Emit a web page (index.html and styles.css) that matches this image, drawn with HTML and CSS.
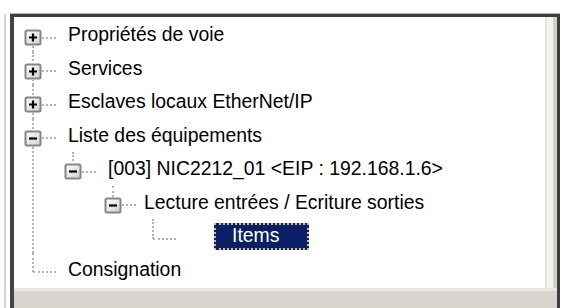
FILE: index.html
```html
<!DOCTYPE html>
<html lang="fr">
<head>
    <meta charset="UTF-8">
    <title>Arborescence</title>
    <link rel="stylesheet" href="styles.css">
</head>
<body>
    <div class="screen">
        <div class="edge"></div>
        <div class="frame">
            <div class="pane">
                <ul class="tree root">
                    <li>
                        <div class="row">
                            <span class="tog"><svg width="18" height="17" viewBox="0 0 18 17"><use href="#box"/><path d="M5 8.5h8M9 4.5v8" stroke="#000" stroke-width="2.2"/></svg></span>
                            <span class="label">Propriétés de voie</span>
                        </div>
                    </li>
                    <li>
                        <div class="row">
                            <span class="tog"><svg width="18" height="17" viewBox="0 0 18 17"><use href="#box"/><path d="M5 8.5h8M9 4.5v8" stroke="#000" stroke-width="2.2"/></svg></span>
                            <span class="label">Services</span>
                        </div>
                    </li>
                    <li>
                        <div class="row">
                            <span class="tog"><svg width="18" height="17" viewBox="0 0 18 17"><use href="#box"/><path d="M5 8.5h8M9 4.5v8" stroke="#000" stroke-width="2.2"/></svg></span>
                            <span class="label">Esclaves locaux EtherNet/IP</span>
                        </div>
                    </li>
                    <li>
                        <div class="row">
                            <span class="tog"><svg width="18" height="17" viewBox="0 0 18 17"><use href="#box"/><path d="M5 8.5h8" stroke="#000" stroke-width="2.2"/></svg></span>
                            <span class="label">Liste des équipements</span>
                        </div>
                        <ul class="tree">
                            <li>
                                <div class="row">
                                    <span class="tog"><svg width="18" height="17" viewBox="0 0 18 17"><use href="#box"/><path d="M5 8.5h8" stroke="#000" stroke-width="2.2"/></svg></span>
                                    <span class="label">[003] NIC2212_01 &lt;EIP : 192.168.1.6&gt;</span>
                                </div>
                                <ul class="tree">
                                    <li>
                                        <div class="row">
                                            <span class="tog"><svg width="18" height="17" viewBox="0 0 18 17"><use href="#box"/><path d="M5 8.5h8" stroke="#000" stroke-width="2.2"/></svg></span>
                                            <span class="label tight">Lecture entrées / Ecriture sorties</span>
                                        </div>
                                        <ul class="tree">
                                            <li class="leaf">
                                                <div class="row">
                                                    <span class="tog"></span>
                                                    <span class="label selected">Items</span>
                                                </div>
                                            </li>
                                        </ul>
                                    </li>
                                </ul>
                            </li>
                        </ul>
                    </li>
                    <li class="leaf">
                        <div class="row">
                            <span class="tog"></span>
                            <span class="label">Consignation</span>
                        </div>
                    </li>
                </ul>
            </div>
            <div class="vstrip"></div>
            <div class="hstrip"></div>
        </div>
    </div>

    <svg width="0" height="0" class="defs">
        <defs>
            <linearGradient id="boxfill" x1="0" y1="0" x2="1" y2="1">
                <stop offset="0" stop-color="#ffffff"/>
                <stop offset="1" stop-color="#d0d0d0"/>
            </linearGradient>
            <rect id="box" x="1.5" y="1.5" width="15" height="14" rx="1.5" fill="url(#boxfill)" stroke="#858585" stroke-width="2"/>
        </defs>
    </svg>
</body>
</html>
```

FILE: styles.css
```css
body {
    margin: 0;
    background-color: #ffffff;
    font-family: "Liberation Sans", Arial, sans-serif;
    color: #000000;
    overflow: hidden;
}

.screen {
    display: flex;
    height: 308px;
    padding: 14px 0 0 4px;
    box-sizing: border-box;
}

.edge {
    width: 2px;
    margin-right: 4px;
    background-color: #d2d2d2;
}

.frame {
    width: 550px;
    box-sizing: border-box;
    border-top: 3px solid #3e3e3e;
    border-left: 4px solid #444444;
    border-right: 3px solid #3e3e3e;
    box-shadow: 0 -1px 0 #b4b4b4;
    display: grid;
    grid-template-columns: 1fr 12px;
    grid-template-rows: 271px 1fr;
}

.pane {
    background-color: #ffffff;
    overflow: hidden;
}

.vstrip {
    background: linear-gradient(to right, #e4e1da 0, #e4e1da 2px, #f5f4f0 2px, #f5f4f0 8px, #d5d1c9 8px);
}

.hstrip {
    grid-column: 1 / 3;
    background-color: #d8d5ce;
    border-top: 3px solid #e9e7e2;
}

.defs {
    position: absolute;
}

/* tree */

.tree {
    list-style: none;
    margin: 0;
    padding: 0 0 0 40px;
}

.tree.root {
    padding: 1.25px 0 0 10px;
}

.tree li {
    position: relative;
}

.tree li::before {
    content: "";
    position: absolute;
    left: 8px;
    top: 0;
    bottom: 0;
    border-left: 2px dotted #b4b4b4;
}

.tree li:last-child::before {
    bottom: auto;
    height: 19.25px;
}

.tree.root > li:first-child::before {
    top: 19.25px;
}

.tree li::after {
    content: "";
    position: absolute;
    left: 9px;
    top: 18.25px;
    width: 23px;
    border-top: 2px dotted #b4b4b4;
}

.row {
    display: flex;
    align-items: center;
    height: 33.5px;
}

.tog {
    position: relative;
    z-index: 1;
    width: 18px;
    height: 17px;
    margin-top: 5px;
    flex: none;
    background-color: #ffffff;
}

.leaf .tog {
    background: none;
}

.tog svg {
    display: block;
}

.label {
    margin-left: 26px;
    font-size: 19.4px;
    line-height: 1;
    white-space: nowrap;
}

.label.tight {
    margin-left: 22px;
}

.label.selected {
    margin-left: 52px;
    width: 95px;
    height: 27px;
    box-sizing: border-box;
    padding-left: 16px;
    display: flex;
    align-items: center;
    color: #ffffff;
    background-color: #0a1f66;
    border: 2px dotted #d6c07c;
}
```
